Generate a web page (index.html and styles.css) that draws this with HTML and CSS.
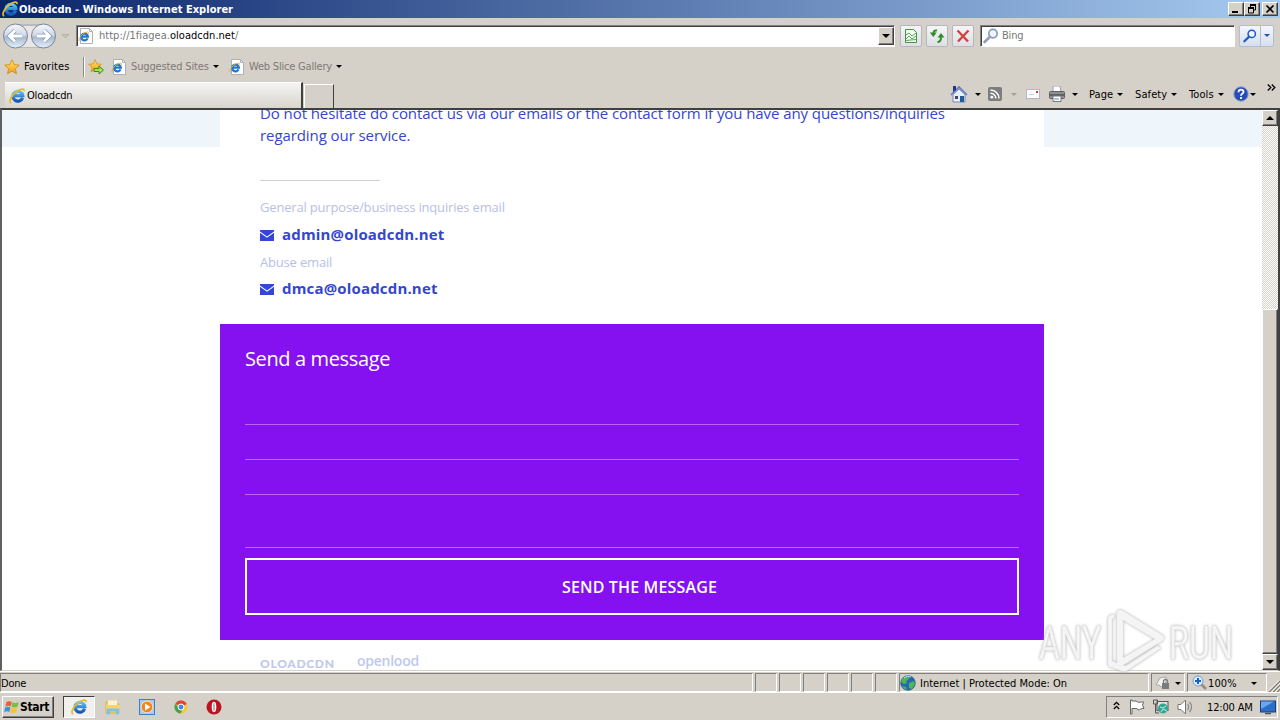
FILE: index.html
```html
<!DOCTYPE html>
<html lang="en">
<head>
<meta charset="UTF-8">
<meta name="viewport" content="width=device-width, initial-scale=1.0">
<title>Oloadcdn - Windows Internet Explorer</title>
<link rel="stylesheet" href="styles.css">
</head>
<body>
<svg class="defs">
    <defs>
        <linearGradient id="gBlue" x1="0" y1="0" x2="0" y2="1"><stop offset="0" stop-color="#5cc4f5"/><stop offset="1" stop-color="#1456b8"/></linearGradient>
        <linearGradient id="gBall" x1="0" y1="0" x2="0" y2="1"><stop offset="0" stop-color="#f4f6fa"/><stop offset=".45" stop-color="#d3dbe8"/><stop offset=".55" stop-color="#a9b9d0"/><stop offset="1" stop-color="#e4f2fc"/></linearGradient>
        <linearGradient id="gStar" x1="0" y1="0" x2="0" y2="1"><stop offset="0" stop-color="#ffe873"/><stop offset="1" stop-color="#f09a12"/></linearGradient>
        <symbol id="ie" viewBox="0 0 16 16">
            <path d="M13.6 9.800A4.900 4.900 0 1 1 13.800 7.700H5.400" fill="none" stroke="url(#gBlue)" stroke-width="3.200"/>
            <path d="M2.200 15C-1 14 2.500 6.800 8 3.200 11.500.9 15.600-.2 15 3.200" fill="none" stroke="#e9b929" stroke-width="1.700"/>
        </symbol>
        <symbol id="iepage" viewBox="0 0 16 16">
            <path d="M2.500.5h9l3 3v12h-12z" fill="#fff" stroke="#aab0bd"/>
            <path d="M11.500.5v3h3" fill="none" stroke="#aab0bd"/>
            <path d="M9.600 10.400A3.400 3.400 0 1 1 9.900 8.600H4" fill="none" stroke="#2277cc" stroke-width="2.200"/>
            <path d="M1.600 13.200C-.4 12 3 7 6.500 5 9 3.700 11 3.600 10.400 5.600" fill="none" stroke="#e0b030"/>
        </symbol>
        <symbol id="star" viewBox="0 0 16 16"><path d="M8 .8l2.100 4.800 5.200.5-3.900 3.500 1.100 5.200L8 12.100l-4.500 2.700 1.100-5.200L.7 6.100l5.200-.5z" fill="url(#gStar)" stroke="#d18a13" stroke-width=".8"/></symbol>
        <symbol id="glass" viewBox="0 0 16 16"><circle cx="10" cy="5.600" r="4.200" fill="#eef6fd" stroke="currentColor" stroke-width="1.700"/><path d="M6.800 8.800L1.600 14" stroke="currentColor" stroke-width="2.600" stroke-linecap="round"/></symbol>
        <symbol id="mail" viewBox="0 0 14 11"><path d="M0 0h14v1.600L7 6.600 0 1.600z M0 2.800l7 4.900 7-4.900V11H0z" fill="#3446d8"/></symbol>
    </defs>
</svg>

<div class="titlebar">
    <svg class="i16"><use href="#ie"/></svg>
    <span class="title">Oloadcdn - Windows Internet Explorer</span>
    <div class="winbtns">
        <div class="winbtn"><svg viewBox="0 0 12 10"><path d="M2 8h6" stroke="#000" stroke-width="2"/></svg></div>
        <div class="winbtn"><svg viewBox="0 0 12 10"><path d="M4 0h6v2H4zM2 3h6v2H2z"/><path d="M4.500 1v2M9.500 1v5H8M2.500 4v5h5V4" fill="none" stroke="#000"/></svg></div>
        <div class="winbtn close"><svg viewBox="0 0 12 10"><path d="M2.500 1.500l7 7M9.500 1.500l-7 7" stroke="#000" stroke-width="1.700"/></svg></div>
    </div>
</div>

<div class="navbar">
    <svg class="travel" viewBox="0 0 76 30">
        <rect x="5" y="3" width="50" height="24" rx="10" fill="#b9b9c0"/>
        <rect x="8" y="5" width="44" height="21" rx="10" fill="#e9e7e6"/>
        <circle cx="15.500" cy="15" r="12" fill="url(#gBall)" stroke="#7c8698"/>
        <circle cx="43.500" cy="15" r="12" fill="url(#gBall)" stroke="#7c8698"/>
        <path d="M22 15H10M15 9.500L9.500 15l5.500 5.500" fill="none" stroke="#8c9fbd" stroke-width="4.500"/>
        <path d="M22 15H10M15 9.500L9.500 15l5.500 5.500" fill="none" stroke="#fff" stroke-width="2.800"/>
        <path d="M37 15h12M44 9.500l5.500 5.500-5.500 5.500" fill="none" stroke="#8c9fbd" stroke-width="4.500"/>
        <path d="M37 15h12M44 9.500l5.500 5.500-5.500 5.500" fill="none" stroke="#fff" stroke-width="2.800"/>
        <path d="M62 13.500h7L65.500 17z" fill="#c9c5be" stroke="#aaa7a2" stroke-width=".7"/>
    </svg>
    <div class="address">
        <svg class="i16"><use href="#iepage"/></svg>
        <span class="url">http://1fiagea.<b>oloadcdn.net</b>/</span>
        <div class="combo"><i class="arrow big"></i></div>
    </div>
    <div class="navbtn"><svg viewBox="0 0 16 16"><path d="M2.500 1.500h8l3 3v10h-11z" fill="#f3fff0" stroke="#419447"/><path d="M3 7l3-2 3 3 4-3M3 11l3-3 3 3 4-3M3 12.500l10-1" fill="none" stroke="#58a855"/></svg></div>
    <div class="navbtn"><svg viewBox="0 0 16 16"><path d="M8 2.500C5.500 2 4.500 3 4.500 6M8.500 14c2.500 0 3.500-1.500 3.500-5" fill="none" stroke="#2c8e31" stroke-width="2"/><path d="M.8 4.500h7L4.300 9zM8.500 9.500h7L12 5z" fill="#2c8e31"/></svg></div>
    <div class="navbtn"><svg viewBox="0 0 16 16"><path d="M2.500 2.500L13 13.500M13.500 2.500L3 13.500" stroke="#cc4545" stroke-width="2.400"/></svg></div>
    <div class="search">
        <svg class="i16"><use href="#glass"/></svg>
        <span class="bing">Bing</span>
    </div>
    <div class="go">
        <div class="goicon"><svg class="i14"><use href="#glass"/></svg></div>
        <div class="godrop"><i class="arrow blue"></i></div>
    </div>
</div>

<div class="favbar">
    <svg class="i16"><use href="#star"/></svg>
    <span class="label fav">Favorites</span>
    <i class="sep"></i>
    <svg class="i16 add" viewBox="0 0 16 16"><use href="#star" width="14" height="14"/><path d="M6 9.500h5V7l4.500 4-4.500 4v-2.500H6z" fill="#a6e04d" stroke="#348e1d"/></svg>
    <svg class="i16"><use href="#iepage"/></svg>
    <span class="label grey sites">Suggested Sites</span>
    <i class="arrow"></i>
    <svg class="i16 slice"><use href="#iepage"/></svg>
    <span class="label grey gallery">Web Slice Gallery</span>
    <i class="arrow"></i>
</div>

<div class="tabbar">
    <div class="tab"><svg class="i16"><use href="#ie"/></svg><span class="label">Oloadcdn</span></div>
    <div class="newtab"></div>
    <div class="commands">
        <svg class="i18 home" viewBox="0 0 18 18"><path d="M3 9.500V17h12V9.500L9 4z" fill="#e7f0fa" stroke="#7a8bb4"/><path d="M1 10l8-8 8 8" fill="none" stroke="#5f7fc4" stroke-width="1.700"/><path d="M3 1h3v4L3 7z" fill="#27368c"/><path d="M10 11h4v6h-4z" fill="#1e5c9c"/><path d="M5 11h3v3H5z" fill="#446"/></svg>
        <i class="arrow"></i>
        <svg class="i14 rss" viewBox="0 0 14 14"><rect width="14" height="14" rx="2" fill="#7d7d7d"/><circle cx="3.800" cy="10.200" r="1.400" fill="#fff"/><path d="M2.500 6.200a5.300 5.300 0 0 1 5.300 5.300M2.500 3a8.500 8.500 0 0 1 8.500 8.500" fill="none" stroke="#fff" stroke-width="1.500"/></svg>
        <i class="arrow dim"></i>
        <svg class="letter" viewBox="0 0 14 10"><rect x=".5" y=".5" width="13" height="9" fill="#fff" stroke="#b9b4c0"/><path d="M10 2h2v2h-2z" fill="#d33"/><path d="M3 5.500h5" stroke="#ccc"/></svg>
        <svg class="i16 printer" viewBox="0 0 16 16"><path d="M4 0h7l1 6H4z" fill="#fff" stroke="#9aa2b0"/><rect x=".5" y="5.500" width="15" height="7" rx="1" fill="#8d9096" stroke="#5d6068"/><path d="M1 9h14" stroke="#333"/><path d="M4 10h8v5.500H4z" fill="#fff" stroke="#777"/><path d="M5 13h5" stroke="#4a8ed0"/></svg>
        <i class="arrow"></i>
        <span class="label cmd page">Page</span><i class="arrow"></i>
        <span class="label cmd safety">Safety</span><i class="arrow"></i>
        <span class="label cmd tools">Tools</span><i class="arrow"></i>
        <svg class="i16 help" viewBox="0 0 16 16"><circle cx="8" cy="8" r="7.200" fill="#284db5" stroke="#8ba0cf"/><path d="M5.500 6.200C5.600 2.800 10.700 3 10.500 6c-.1 1.700-2.500 1.600-2.500 3.700M8 11v2" fill="none" stroke="#fff" stroke-width="1.800"/></svg>
        <i class="arrow"></i>
        <svg class="more" viewBox="0 0 9 7"><path d="M.8.5l3 3-3 3M4.800.5l3 3-3 3" fill="none" stroke="#000" stroke-width="1.300"/></svg>
    </div>
</div>

<div class="viewport">
    <div class="site">
        <div class="band"></div>
        <div class="contact">
            <p class="intro">Do not hesitate do contact us via our emails or the contact form if you have any questions/inquiries<br>regarding our service.</p>
            <div class="rule"></div>
            <div class="hint">General purpose/business inquiries email</div>
            <div class="email"><svg class="env"><use href="#mail"/></svg><span>admin@oloadcdn.net</span></div>
            <div class="hint">Abuse email</div>
            <div class="email second"><svg class="env"><use href="#mail"/></svg><span>dmca@oloadcdn.net</span></div>
        </div>
        <div class="message">
            <h2>Send a message</h2>
            <div class="field first"></div>
            <div class="field"></div>
            <div class="field"></div>
            <div class="field area"></div>
            <div class="send"><span>SEND THE MESSAGE</span></div>
        </div>
        <div class="logos"><span class="logo1">OLOADCDN</span><span class="logo2">openlood</span></div>
    </div>
    <div class="scrollbar">
        <div class="sbtn"><i class="arrow big up"></i></div>
        <div class="track"></div>
        <div class="thumb"></div>
        <div class="sbtn"><i class="arrow big"></i></div>
    </div>
</div>

<div class="statusbar">
    <div class="pane done"><span class="label">Done</span></div>
    <div class="pane small"></div>
    <div class="pane small"></div>
    <div class="pane small"></div>
    <div class="pane small"></div>
    <div class="pane small"></div>
    <div class="pane small"></div>
    <div class="pane zone">
        <svg class="i16" viewBox="0 0 16 16"><circle cx="8" cy="8" r="7.300" fill="#2467b5" stroke="#2a5c80" stroke-width=".7"/><path d="M2 4c2-3 6-3 8-2L8 5 6 6l1 2-3 1-3-2zM9 8l5-2 1 3-3 5-3-1zM2 11l4 1 1 2.500C5 14.500 3 13 2 11z" fill="#4fb650"/><path d="M4 3c2-2 5-2 7-1" fill="none" stroke="#bfe6ff"/></svg>
        <span class="label internet">Internet | Protected Mode: On</span>
    </div>
    <div class="pane privacy">
        <svg class="i16" viewBox="0 0 16 16"><path d="M1 10l4-7 6-1v5l-5 5-2-2z" fill="#f3f3f3" stroke="#aaa"/><rect x="7" y="8" width="7" height="6" fill="#7c7c7c"/><path d="M8.500 8V6.500a2 2 0 0 1 4 0V8" fill="none" stroke="#7c7c7c" stroke-width="1.300"/></svg>
        <i class="arrow"></i>
    </div>
    <div class="pane zoom">
        <svg class="i16" viewBox="0 0 16 16"><path d="M9 9l5 5" stroke="#9a8c7c" stroke-width="2.500"/><circle cx="6" cy="6" r="5" fill="#d6ecff" stroke="#7b9fc4"/><path d="M6 3v6M3 6h6" stroke="#1761c9" stroke-width="2"/></svg>
        <span class="label pct">100%</span>
        <i class="arrow"></i>
    </div>
    <svg class="grip" viewBox="0 0 12 12"><path d="M0 12L12 0M4 12l8-8M8 12l4-4" stroke="#807c74" stroke-width="1.500"/><path d="M-1.500 12L12-1.500M2.500 12L12 2.500M6.500 12L12 6.500" stroke="#fff"/></svg>
</div>

<div class="taskbar">
    <div class="start">
        <svg class="i16" viewBox="0 0 16 16"><path d="M2.500 3C4.500 1.800 6 2 7.800 3L6.700 7.500C5 6.600 3.300 6.600 1.400 7.600z" fill="#e9622b"/><path d="M8.600 3.300c2 1 4 .9 6.200-.3l-1.300 4.700c-2 1.100-4 1-6 .1z" fill="#7bbd3c"/><path d="M1.200 8.500c2-1 3.600-.9 5.300 0l-1.200 4.500c-1.800-1-3.400-.8-5.200.2z" fill="#3f8fe0"/><path d="M7.300 8.800c2 1 4 .9 6-.1L12 13.300c-2 1-4 1-5.900 0z" fill="#f6c431"/></svg>
        <span>Start</span>
    </div>
    <div class="task active"><svg class="i16"><use href="#ie"/></svg></div>
    <svg class="i16 app" viewBox="0 0 16 16"><path d="M1 3h5l1 2h7v9H1z" fill="#f2ce63" stroke="#d0a33d" stroke-width=".6"/><path d="M3 1.500h9V8H3z" fill="#fbf4c9"/><path d="M1 6h14v4H1z" fill="#f3d372"/><path d="M2 15.500V9.500h12v6h-3v-3H5v3z" fill="#7cc3e8"/></svg>
    <svg class="i16 app" viewBox="0 0 16 16"><rect x=".5" y=".5" width="15" height="15" fill="#a9cbec" stroke="#3b7fc4"/><circle cx="8" cy="8" r="5.800" fill="#f28618" stroke="#fff" stroke-width=".6"/><path d="M6 4.500L11.500 8 6 11.500z" fill="#fff"/></svg>
    <svg class="i14 app chrome" viewBox="0 0 14 14"><circle cx="7" cy="7" r="6.500" fill="#f8ca2c"/><path d="M7 7L1.300 3.800A6.500 6.500 0 0 1 12.800 4z" fill="#dd4537"/><path d="M1.300 3.800A6.500 6.500 0 0 0 6.700 13.500L9 8 5 8z" fill="#42a24f"/><circle cx="7" cy="7" r="3" fill="#4588e8" stroke="#fff"/></svg>
    <svg class="i16 app opera" viewBox="0 0 16 16"><circle cx="8" cy="8" r="7.500" fill="#b91420"/><ellipse cx="8" cy="8" rx="2.300" ry="5.200" fill="#fff"/><ellipse cx="8" cy="8" rx="1" ry="4.500" fill="#c9ada9"/></svg>
    <div class="tray">
        <svg class="chev" viewBox="0 0 7 9"><path d="M.8 4L3.500 1.300 6.200 4M.8 8l2.700-2.700L6.200 8" fill="none" stroke="#000" stroke-width="1.300"/></svg>
        <svg class="i16 flag" viewBox="0 0 16 16"><path d="M1.500 1v14H3V9.500h5l1 1.500c2 0 3-2 6-1.500L13.500 6l1-3c-3-.5-4 1-6 0L7 2H3V1z" fill="#fff" stroke="#666"/></svg>
        <svg class="i16 net" viewBox="0 0 16 16"><rect x="4" y="2.500" width="11" height="9" fill="#e4e4e4" stroke="#555"/><circle cx="10" cy="9.500" r="5" fill="#32a695"/><path d="M7 8l3 1 3-2M8 13l2-3 4 2" fill="none" stroke="#bcf0dd"/><path d="M.5 1h4v4h-4zM2.500 5v9H6" fill="none" stroke="#555"/></svg>
        <svg class="i16 vol" viewBox="0 0 16 16"><path d="M1 5.500h3L8.500 1v14L4 10.500H1z" fill="#fff" stroke="#777"/><path d="M10.500 5c1.500 2 1.500 4 0 6M12.500 3c2.500 3 2.500 7 0 10" fill="none" stroke="#888" stroke-width="1.200"/></svg>
        <span class="label clock">12:00 AM</span>
        <svg class="i16 desk" viewBox="0 0 16 16"><rect x=".5" y="2" width="15" height="11" fill="#2c6fc9" stroke="#183d7c"/><path d="M1 2.500h13L1 10z" fill="#69a7ea"/><path d="M5 14.500h6" stroke="#456" stroke-width="1.500"/></svg>
    </div>
</div>

<svg class="watermark" viewBox="0 0 200 64">
    <text x="2" y="51" textLength="62" lengthAdjust="spacingAndGlyphs">ANY</text>
    <text x="132" y="51" textLength="64" lengthAdjust="spacingAndGlyphs">RUN</text>
    <path d="M71 50V11q0-3 3-4l3-1v4l-2 1v40z"/>
    <path d="M71 50v6q0 3 3 3l11 4q3 1 6-1l33-22-4-2-31 20-14-5v-3z"/>
    <path d="M80 50V5q1-5 6-2l39 24q4 3 0 6L86 57q-6 2-6-4zM86 12v38l32-19z"/>
</svg>
</body>
</html>
```
FILE: styles.css
```css
* {
    box-sizing: border-box;
}

body {
    margin: 0;
    width: 1280px;
    height: 720px;
    overflow: hidden;
    display: flex;
    flex-direction: column;
    background: #d5d0c8;
    font-family: "DejaVu Sans Condensed", "DejaVu Sans", sans-serif;
    font-stretch: condensed;
    font-size: 11px;
    color: #000;
    position: relative;
}

.defs {
    position: absolute;
    width: 0;
    height: 0;
}

svg {
    flex: none;
    display: block;
}

.i16 { width: 16px; height: 16px; }
.i14 { width: 14px; height: 14px; }
.i18 { width: 18px; height: 18px; }

.label {
    flex: none;
    white-space: nowrap;
    letter-spacing: -0.2px;
}

.arrow {
    flex: none;
    width: 0;
    height: 0;
    border: 3px solid transparent;
    border-top-color: #000;
    border-bottom: 0;
}

.arrow.big { border-width: 4px 4px 0; }
.arrow.up { transform: rotate(180deg); }
.arrow.blue { border-top-color: #1e56b0; }
.arrow.dim { border-top-color: #a39e97; }

/* title bar */
.titlebar {
    flex: none;
    height: 18px;
    display: flex;
    align-items: center;
    padding: 0 2px;
    background: linear-gradient(90deg, #0a246a, #a6caf0);
}

.title {
    margin-left: 1px;
    color: #fff;
    font-weight: bold;
    white-space: nowrap;
    letter-spacing: 0.03px;
}

.winbtns {
    margin-left: auto;
    display: flex;
}

.winbtn {
    width: 16px;
    height: 14px;
    background: #d5d0c8;
    border: 1px solid;
    border-color: #fff #404040 #404040 #fff;
    box-shadow: inset -1px -1px #808080;
}

.winbtn svg { width: 12px; height: 10px; margin: 1px; }
.winbtn.close { margin-left: 2px; }

/* address row */
.navbar {
    flex: none;
    height: 35px;
    display: flex;
    align-items: center;
}

.travel { width: 76px; height: 30px; }

.address, .search {
    height: 22px;
    background: #fff;
    border: 1px solid;
    border-color: #808080 #fff #fff #808080;
    box-shadow: inset 1px 1px #404040;
    display: flex;
    align-items: center;
    color: #777;
}

.address { width: 819px; padding: 0 0 0 1px; }
.url { margin-left: 5px; letter-spacing: 0.03px; }
.url b { font-weight: normal; color: #000; }

.combo {
    margin-left: auto;
    width: 16px;
    height: 18px;
    background: #d5d0c8;
    border: 1px solid;
    border-color: #fff #404040 #404040 #fff;
    box-shadow: inset -1px -1px #808080;
    display: flex;
    align-items: center;
    justify-content: center;
}

.navbtn {
    width: 22px;
    height: 22px;
    margin-left: 4px;
    border: 1px solid #b6b6bd;
    border-radius: 2px;
    background: linear-gradient(#f5f5f6, #dfdfe5);
    padding: 2px;
}

.address + .navbtn { margin-left: 5px; }
.navbtn svg { width: 16px; height: 16px; }

.search { width: 255px; margin-left: 6px; padding-left: 2px; }
.search svg { color: #8c9db5; }
.bing { margin-left: 3px; letter-spacing: -0.2px; }

.go {
    display: flex;
    width: 35px;
    height: 22px;
    margin-left: 4px;
    border: 1px solid #b5bccb;
    border-radius: 2px;
    background: linear-gradient(#f3f6fc, #d6dfef);
}

.goicon {
    width: 21px;
    padding: 3px;
    color: #1f59c4;
    border-right: 1px solid #b5bccb;
}

.godrop { flex: 1; display: flex; align-items: center; justify-content: center; }

/* favorites */
.favbar {
    flex: none;
    height: 27px;
    display: flex;
    align-items: center;
    padding-left: 4px;
}

.grey { color: #7d7a76; }
.fav { width: 59px; margin-left: 4px; letter-spacing: 0.1px; }

.sep {
    width: 2px;
    height: 20px;
    background: #fff;
    border-left: 1px solid #8f8b85;
}

.add { margin: 0 7px 0 3px; }
.sites { width: 79px; margin: 0 3px 0 4px; letter-spacing: -0.15px; }
.slice { margin-left: 10px; }
.gallery { width: 84px; margin: 0 3px 0 4px; letter-spacing: -0.2px; }

/* tabs and commands */
.tabbar {
    flex: none;
    height: 28px;
    display: flex;
    padding-left: 5px;
}

.tab {
    width: 298px;
    margin-top: 2px;
    padding-left: 4px;
    display: flex;
    align-items: center;
    gap: 2px;
    background: linear-gradient(#f5f4f3, #d8d4cd);
    border: solid;
    border-width: 1px 2px 0 0;
    border-color: #fff #404040;
}

.newtab {
    width: 30px;
    margin: 4px 0 0 1px;
    border: solid;
    border-width: 1px 1px 0 1px;
    border-color: #fff #404040 #fff #fff;
}

.commands {
    display: flex;
    align-items: center;
    margin-left: 616px;
}

.home + .arrow { margin-left: 7px; }
.rss { margin-left: 7px; }
.rss + .arrow { margin-left: 9px; }
.letter { width: 14px; height: 10px; margin-left: 9px; }
.printer { margin: 0 7px 0 9px; }
.cmd { margin-left: 11px; margin-right: 3px; letter-spacing: 0.1px; }
.page { width: 25px; }
.safety { width: 33px; margin-left: 12px; }
.tools { width: 26px; margin-left: 12px; }
.help { margin-left: 9px; margin-right: 1px; }
.more { width: 9px; height: 7px; margin: 0 0 13px 11px; }

/* page area */
.viewport {
    flex: none;
    height: 563px;
    display: flex;
    overflow: hidden;
    background: #fff;
    border: solid;
    border-width: 2px 2px 1px 2px;
    border-color: #404040 #404040 #d5d0c8 #606060;
}

.site {
    flex: 1;
    font-family: "Open Sans", sans-serif;
    font-stretch: normal;
    color: #3446d0;
}

.band {
    height: 37px;
    background: linear-gradient(90deg, #eff6fb 218px, #fff 218px, #fff 1042px, #eff6fb 1042px);
}

/* scrolled, so the first line starts above the visible area */
.contact {
    height: 222px;
    margin-top: -45px;
    padding-left: 258px;
}

.intro {
    margin: 0;
    font-size: 15px;
    line-height: 22px;
    letter-spacing: -0.078px;
    white-space: nowrap;
}

.rule {
    width: 120px;
    height: 1px;
    margin: 34px 0 16px;
    background: #cdcfe2;
}

.hint {
    height: 21px;
    font-size: 13px;
    line-height: 21px;
    letter-spacing: -0.18px;
    color: #b7c0e6;
}

.email {
    height: 33px;
    display: flex;
    align-items: center;
    gap: 8px;
    font-size: 15px;
    font-weight: bold;
    letter-spacing: 0.17px;
}

.email + .hint { margin-top: 1px; }
.email.second { margin-top: -1px; }
.env { width: 14px; height: 11px; margin-top: 2px; }
.email span { margin-top: -1px; }

.message {
    width: 824px;
    height: 316px;
    margin-left: 218px;
    padding: 22px 25px 25px;
    background: #8510f0;
    color: #fff;
}

.message h2 {
    margin: 0;
    height: 26px;
    font-size: 20px;
    line-height: 26px;
    font-weight: normal;
    letter-spacing: -0.37px;
}

.field {
    height: 35px;
    border-bottom: 1px solid #b866f4;
}

.field.first,
.field.area {
    height: 53px;
}

.send {
    height: 57px;
    margin-top: 10px;
    border: 2px solid #fff;
    display: flex;
    align-items: center;
    justify-content: center;
    padding-left: 15px;
    font-size: 16px;
    font-weight: 600;
    letter-spacing: 0.15px;
}

.logos {
    display: flex;
    align-items: flex-start;
    margin-left: 258px;
    color: #bdc9ee;
}

.logo1 {
    width: 97px;
    margin-top: 17px;
    font: 900 12px/14px "Lato", sans-serif;
    letter-spacing: 0.7px;
}

.logo2 {
    margin-top: 13px;
    font: 600 14px/16px "Open Sans", sans-serif;
    letter-spacing: -0.25px;
}

.scrollbar {
    width: 16px;
    display: flex;
    flex-direction: column;
    background: #ebe8e4;
}

.sbtn, .thumb {
    flex: none;
    height: 16px;
    background: #d5d0c8;
    border: 1px solid;
    border-color: #fff #404040 #404040 #fff;
    box-shadow: inset -1px -1px #808080;
    display: flex;
    align-items: center;
    justify-content: center;
}

.track {
    height: 183px;
    background: repeating-conic-gradient(#d5d0c8 0 25%, #fff 0 50%) 0 0 / 2px 2px;
}

.thumb { height: 345px; }

/* status bar */
.statusbar {
    flex: none;
    height: 22px;
    padding-top: 1px;
    display: flex;
    border-top: 1px solid #fff;
    border-bottom: 1px solid #fff;
}

.pane {
    flex: none;
    height: 19px;
    margin-right: 2px;
    padding-top: 1px;
    display: flex;
    align-items: center;
    border: 1px solid;
    border-color: #808080 #fff #fff #808080;
}

.pane .label { padding-top: 1px; }

.done { width: 753px; }
.small { width: 22px; }
.zone { width: 250px; }
.internet { margin-left: 4px; letter-spacing: 0.01px; }
.privacy { width: 34px; padding-left: 3px; gap: 4px; }
.zoom { width: 80px; padding-left: 4px; }
.pct { width: 43px; letter-spacing: 0.1px; }
.grip { width: 12px; height: 12px; margin-top: 7px; }

/* taskbar */
.taskbar {
    flex: 1;
    display: flex;
    align-items: center;
    padding-left: 2px;
}

.start {
    width: 52px;
    height: 22px;
    display: flex;
    align-items: center;
    padding-left: 1px;
    border: 1px solid;
    border-color: #fff #404040 #404040 #fff;
    box-shadow: inset -1px -1px #808080;
    font-weight: bold;
    font-size: 12px;
    letter-spacing: -0.35px;
}

.task {
    width: 32px;
    height: 22px;
    margin-left: 9px;
    padding: 2px 7px;
    background: #f2f0ed;
    border: 1px solid;
    border-color: #404040 #fff #fff #404040;
}

.app { margin-left: 18px; }
.task + .app { margin-left: 10px; }
.chrome { margin-left: 19px; }
.opera { margin-left: 18px; }

.tray {
    width: 172px;
    height: 22px;
    margin: 0 2px 0 auto;
    padding-left: 6px;
    display: flex;
    align-items: center;
    border: 1px solid;
    border-color: #808080 #fff #fff #808080;
}

.chev { width: 7px; height: 9px; margin-top: -3px; }
.flag { margin-left: 9px; }
.net, .vol { margin-left: 8px; }
.clock { width: 46px; margin-left: 14px; letter-spacing: -0.15px; padding-top: 1px; }
.desk { margin-left: 7px; }

/* overlay mark in the corner of the recording */
.watermark {
    position: absolute;
    left: 1037px;
    top: 608px;
    width: 200px;
    height: 64px;
    overflow: visible;
    fill: #fff;
    fill-opacity: 0.85;
    fill-rule: evenodd;
    stroke: #e2e2e2;
    stroke-width: 0.5;
    filter: drop-shadow(0 0 1.5px #aaa);
    font: 47px Roboto, sans-serif;
}
```
